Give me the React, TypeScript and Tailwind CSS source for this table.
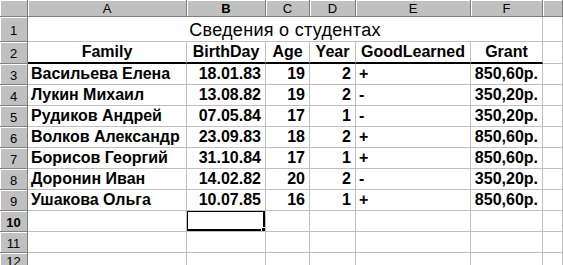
import React from "react";

interface Student {
  name: string;
  birth: string;
  age: number;
  year: number;
  good: string;
  grant: string;
}

const students: Student[] = [
  { name: "Васильева Елена", birth: "18.01.83", age: 19, year: 2, good: "+", grant: "850,60р." },
  { name: "Лукин Михаил", birth: "13.08.82", age: 19, year: 2, good: "-", grant: "350,20р." },
  { name: "Рудиков Андрей", birth: "07.05.84", age: 17, year: 1, good: "-", grant: "350,20р." },
  { name: "Волков Александр", birth: "23.09.83", age: 18, year: 2, good: "+", grant: "850,60р." },
  { name: "Борисов Георгий", birth: "31.10.84", age: 17, year: 1, good: "+", grant: "850,60р." },
  { name: "Доронин Иван", birth: "14.02.82", age: 20, year: 2, good: "-", grant: "350,20р." },
  { name: "Ушакова Ольга", birth: "10.07.85", age: 16, year: 1, good: "+", grant: "850,60р." },
];

const columns = ["A", "B", "C", "D", "E", "F", ""];

const head =
  "bg-[#c0c0c0] border-r border-b border-[#808080] shadow-[inset_1px_1px_0_#ffffff] flex items-center justify-center text-[13px] leading-none text-black";
const cell =
  "border-r border-b border-[#c0c0c0] flex items-end overflow-hidden whitespace-nowrap leading-[16px] pb-[2px]";

function RowHead({ n, active }: { n: number; active?: boolean }) {
  return <div className={`${head} pt-[2px] ${active ? "font-bold" : ""}`}>{n}</div>;
}

export default function App() {
  return (
    <div className="w-[563px] h-[265px] overflow-hidden bg-white text-black font-['Liberation_Sans',Arial,sans-serif]">
      <div className="grid grid-cols-[28px_159px_79px_44px_46px_115px_72px_1fr] grid-rows-[17px_25px_22px_repeat(9,21px)]">
        {/* column letters */}
        <div className={head} />
        {columns.map((c, i) => (
          <div key={i} className={`${head} ${c === "B" ? "font-bold" : ""}`}>
            {c}
          </div>
        ))}

        {/* title, merged A1:F1 */}
        <RowHead n={1} />
        <div className={`${cell} col-span-6 justify-center text-[18px] tracking-[0.3px] pb-[3px]`}>
          Сведения о студентах
        </div>
        <div className={cell} />

        {/* field names */}
        <RowHead n={2} />
        {["Family", "BirthDay", "Age", "Year", "GoodLearned", "Grant"].map((t) => (
          <div
            key={t}
            className={`${cell} border-b-2 border-b-black justify-center font-bold text-[16px]`}
          >
            {t}
          </div>
        ))}
        <div className={cell} />

        {students.map((s, i) => (
          <React.Fragment key={s.name}>
            <RowHead n={i + 3} />
            <div className={`${cell} pl-[3px] font-bold text-[16px]`}>{s.name}</div>
            <div className={`${cell} justify-end pr-[4px] font-bold text-[16px]`}>{s.birth}</div>
            <div className={`${cell} justify-end pr-[4px] font-bold text-[16px]`}>{s.age}</div>
            <div className={`${cell} justify-end pr-[4px] font-bold text-[16px]`}>{s.year}</div>
            <div className={`${cell} pl-[3px] font-bold text-[16px]`}>{s.good}</div>
            <div className={`${cell} justify-end pr-[4px] font-bold text-[16px]`}>{s.grant}</div>
            <div className={cell} />
          </React.Fragment>
        ))}

        {[10, 11, 12].map((n) => (
          <React.Fragment key={n}>
            <RowHead n={n} active={n === 10} />
            {columns.map((c, j) => (
              <div key={j} className={`${cell} relative`}>
                {n === 10 && c === "B" && (
                  <div className="absolute -left-[1px] -top-[1px] right-0 bottom-0 border-2 border-black">
                    <div className="absolute -right-[4px] -bottom-[4px] w-[6px] h-[6px] bg-black border border-white" />
                  </div>
                )}
              </div>
            ))}
          </React.Fragment>
        ))}
      </div>
    </div>
  );
}
